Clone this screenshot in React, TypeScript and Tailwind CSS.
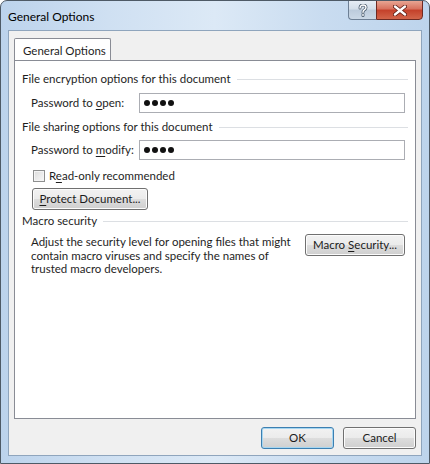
import React from "react";

function U({ children }: { children: React.ReactNode }) {
  return <span className="underline underline-offset-2">{children}</span>;
}

function SectionHead({ label }: { label: string }) {
  return (
    <div className="flex items-center gap-[6px] h-[16px] -mr-[3px]">
      <span className="whitespace-nowrap">{label}</span>
      <div className="flex-1 h-px bg-[#dcdfe3]" />
    </div>
  );
}

function Btn({ children, w, focus }: { children: React.ReactNode; w: string; focus?: boolean }) {
  return (
    <button
      className={`${w} h-[22px] rounded-[3px] border text-[11.5px] leading-none text-[#1b1b1b] whitespace-nowrap bg-[linear-gradient(#f2f2f2_0%,#ebebeb_50%,#dddddd_51%,#cfcfcf_100%)] ${
        focus
          ? "border-[#3c7fb1] shadow-[inset_0_0_0_1px_#a6d6f1]"
          : "border-[#707070] shadow-[inset_0_0_0_1px_#fcfcfc]"
      }`}
    >
      {children}
    </button>
  );
}

function PasswordRow({ label }: { label: React.ReactNode }) {
  return (
    <div className="flex items-center pl-[9px] h-[20px]">
      <span className="w-[108px] whitespace-nowrap">{label}</span>
      <div className="flex-1 h-[20px] border border-[#abadb3] bg-white flex items-center pl-[4px] gap-[2px]">
        {[0, 1, 2, 3].map((i) => (
          <span key={i} className="w-[6px] h-[6px] rounded-full bg-[#111]" />
        ))}
      </div>
    </div>
  );
}

export default function App() {
  return (
    <div className="w-[430px] h-[464px] flex flex-col rounded-t-[7px] border border-[#4e5a66] bg-[linear-gradient(90deg,#bcd3ec_0%,#cfe0f2_25%,#dce9f6_50%,#c9dcf0_75%,#bdd4ec_100%)] font-['Lato','Noto_Sans',sans-serif] text-[11.5px] text-[#1e1e1e] overflow-hidden">
      {/* title bar */}
      <div className="h-[29px] flex items-start justify-between shrink-0">
        <span className="pl-[7px] pt-[7px] text-[12px] text-black">General Options</span>
        <div className="flex mr-[6px] -mt-px">
          <div className="w-[28px] h-[20px] rounded-bl-[4px] border border-[#6d7f94] border-r-0 bg-[linear-gradient(#e6edf5_0%,#d3dee9_45%,#bccbdb_50%,#cbd8e6_100%)] flex items-center justify-center">
            <svg width="10" height="13" viewBox="0 0 10 13">
              <path
                d="M2 4 C2 1.8 3.5 1 5 1 C6.8 1 8 2 8 3.6 C8 5 7 5.6 6 6.2 C5.3 6.6 5 7 5 8.2 M5 10.2 L5 11.6"
                fill="none"
                stroke="#4f6072"
                strokeWidth="3"
                strokeLinecap="round"
              />
              <path
                d="M2 4 C2 1.8 3.5 1 5 1 C6.8 1 8 2 8 3.6 C8 5 7 5.6 6 6.2 C5.3 6.6 5 7 5 8.2 M5 10.2 L5 11.6"
                fill="none"
                stroke="#ffffff"
                strokeWidth="1.4"
                strokeLinecap="round"
              />
            </svg>
          </div>
          <div className="w-[47px] h-[20px] rounded-br-[4px] border border-[#6e2a22] bg-[linear-gradient(#e8a593_0%,#d7705c_45%,#c4402a_50%,#d2654a_100%)] flex items-center justify-center">
            <svg width="14" height="11" viewBox="0 0 14 11">
              <path d="M2 1.5 L12 9.5 M12 1.5 L2 9.5" stroke="#5a1a12" strokeWidth="4" strokeLinecap="round" />
              <path d="M2 1.5 L12 9.5 M12 1.5 L2 9.5" stroke="#ffffff" strokeWidth="2.4" strokeLinecap="round" />
            </svg>
          </div>
        </div>
      </div>

      {/* client area */}
      <div className="flex-1 mx-[7px] mb-[7px] border border-[#8fa5bd] bg-[#f0f0f0] flex flex-col px-[5px] pt-[7px] pb-[6px]">
        {/* tab strip */}
        <div className="flex h-[22px] shrink-0">
          <div className="w-[97px] h-[22px] border border-[#898c95] border-b-0 bg-white rounded-t-[2px] pl-[8px] pt-[3px] relative z-10 -mb-px whitespace-nowrap">
            General Options
          </div>
        </div>

        {/* tab panel */}
        <div className="flex-1 border border-[#898c95] bg-white flex flex-col pl-[7px] pr-[10px] pt-[10px]">
          <SectionHead label="File encryption options for this document" />
          <div className="mt-[6px]">
            <PasswordRow label={<>Password to <U>o</U>pen:</>} />
          </div>

          <div className="mt-[6px]">
            <SectionHead label="File sharing options for this document" />
          </div>
          <div className="mt-[5px]">
            <PasswordRow label={<>Password to <U>m</U>odify:</>} />
          </div>

          <div className="flex items-center gap-[4px] pl-[11px] mt-[9px] h-[14px]">
            <div className="w-[12px] h-[12px] border border-[#8e8f8f] bg-[linear-gradient(135deg,#dcdcdc,#f8f8f8)] shadow-[inset_0_0_0_1px_#f4f4f4]" />
            <span>
              R<U>e</U>ad-only recommended
            </span>
          </div>

          <div className="pl-[10px] mt-[5px]">
            <Btn w="w-[116px]">
              <U>P</U>rotect Document...
            </Btn>
          </div>

          <div className="mt-[3px]">
            <SectionHead label="Macro security" />
          </div>

          <div className="flex justify-between pl-[9px] mt-[4px]">
            <p className="w-[262px] leading-[13.5px] pt-[2px]">
              Adjust the security level for opening files that might contain macro viruses and specify the names of trusted macro developers.
            </p>
            <div className="pt-[1px]">
              <Btn w="w-[100px]">
                Macro <U>S</U>ecurity...
              </Btn>
            </div>
          </div>
        </div>

        {/* bottom buttons */}
        <div className="flex justify-end gap-[9px] pt-[8px] shrink-0">
          <Btn w="w-[73px]" focus>
            OK
          </Btn>
          <Btn w="w-[73px]">Cancel</Btn>
        </div>
      </div>
    </div>
  );
}
